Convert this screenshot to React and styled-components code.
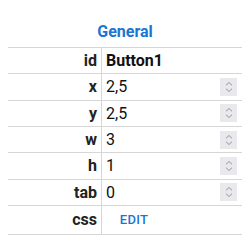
import React from "react";
import styled, { createGlobalStyle } from "styled-components";

const GlobalStyle = createGlobalStyle`
  body {
    margin: 8px;
    background: #fff;
    font-family: Roboto, "Liberation Sans", sans-serif;
    color: rgba(0, 0, 0, 0.87);
  }
`;

const Panel = styled.div`
  width: 234px;
`;

const Title = styled.div`
  padding: 12px 0 3px;
  line-height: 24px;
  font-size: 16px;
  font-weight: 700;
  color: #1976d2;
  text-align: center;
`;

const Table = styled.div`
  border-top: 1px solid #d6d6d6;
`;

const Row = styled.div`
  display: grid;
  grid-template-columns: 94px 1fr;
  box-sizing: border-box;
  height: ${(p) => (p.$tall ? "29px" : "26.333px")};
  border-bottom: 1px solid #d6d6d6;
`;

const Label = styled.div`
  display: flex;
  align-items: center;
  justify-content: flex-end;
  padding-right: 4px;
  border-right: 1px solid #d6d6d6;
  font-size: 16px;
  font-weight: 700;
  color: #222;
`;

const Value = styled.div`
  display: flex;
  align-items: center;
  min-width: 0;
`;

const Field = styled.input`
  flex: 1;
  min-width: 0;
  border: none;
  outline: none;
  background: transparent;
  padding: 0 0 0 4px;
  font-family: Roboto, "Liberation Sans", sans-serif;
  font-size: 16px;
  font-weight: ${(p) => (p.$bold ? 700 : 400)};
  color: #111;
`;

const Spinner = styled.div`
  width: 17px;
  height: 18px;
  margin-right: 5px;
  background: #e9e9ed;
  display: flex;
  align-items: center;
  justify-content: center;
`;

const EditButton = styled.button`
  min-width: 64px;
  padding: 4px 5px;
  border: none;
  background: transparent;
  font-family: Roboto, "Liberation Sans", sans-serif;
  font-size: 13px;
  font-weight: 500;
  letter-spacing: 0.3px;
  line-height: 19px;
  color: #1976d2;
  text-transform: uppercase;
  cursor: pointer;
`;

const SpinIcon = () => (
  <svg width="8" height="12" viewBox="0 0 8 12" fill="none" stroke="#96969b" strokeWidth="1">
    <path d="M1 4.3 L4 1.5 L7 4.3" />
    <path d="M1 7.7 L4 10.5 L7 7.7" />
  </svg>
);

const rows = [
  { key: "x", value: "2,5" },
  { key: "y", value: "2,5" },
  { key: "w", value: "3" },
  { key: "h", value: "1" },
  { key: "tab", value: "0" },
];

export default function App() {
  return (
    <>
      <GlobalStyle />
      <Panel>
        <Title>General</Title>
        <Table>
          <Row>
            <Label>id</Label>
            <Value>
              <Field $bold defaultValue="Button1" />
            </Value>
          </Row>
          {rows.map((r) => (
            <Row key={r.key}>
              <Label>{r.key}</Label>
              <Value>
                <Field defaultValue={r.value} />
                <Spinner>
                  <SpinIcon />
                </Spinner>
              </Value>
            </Row>
          ))}
          <Row $tall>
            <Label>css</Label>
            <Value>
              <EditButton>Edit</EditButton>
            </Value>
          </Row>
        </Table>
      </Panel>
    </>
  );
}
